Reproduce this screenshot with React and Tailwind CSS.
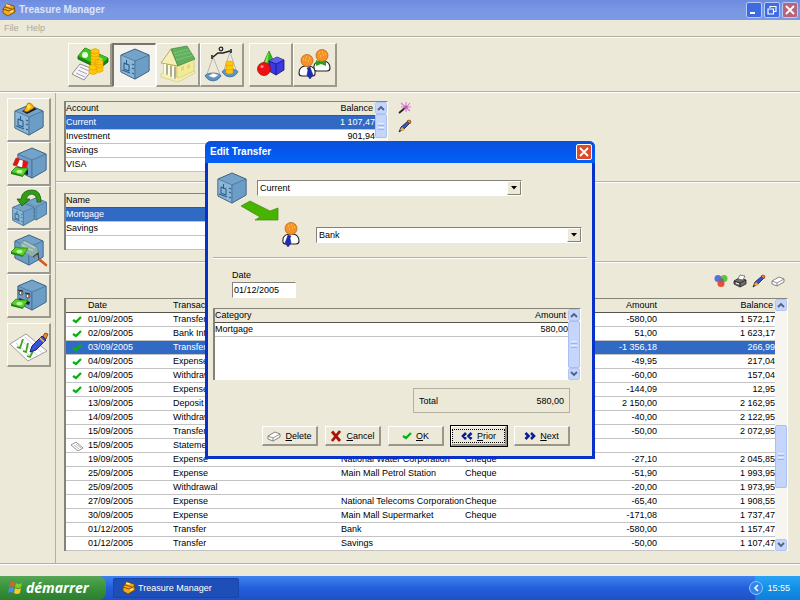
import { useState } from 'react';

const transactions = [
  { mark: 'check', date: '01/09/2005', type: 'Transfer', payee: 'Bank', ref: '', amount: '-580,00', balance: '1 572,17' },
  { mark: 'check', date: '02/09/2005', type: 'Bank Interest', payee: 'Bank', ref: '', amount: '51,00', balance: '1 623,17' },
  { mark: 'check', date: '03/09/2005', type: 'Transfer', payee: 'VISA', ref: '', amount: '-1 356,18', balance: '266,99' },
  { mark: 'check', date: '04/09/2005', type: 'Expense', payee: '', ref: '', amount: '-49,95', balance: '217,04' },
  { mark: 'check', date: '04/09/2005', type: 'Withdrawal', payee: '', ref: '', amount: '-60,00', balance: '157,04' },
  { mark: 'check', date: '10/09/2005', type: 'Expense', payee: '', ref: '', amount: '-144,09', balance: '12,95' },
  { mark: '', date: '13/09/2005', type: 'Deposit', payee: '', ref: '', amount: '2 150,00', balance: '2 162,95' },
  { mark: '', date: '14/09/2005', type: 'Withdrawal', payee: '', ref: '', amount: '-40,00', balance: '2 122,95' },
  { mark: '', date: '15/09/2005', type: 'Transfer', payee: '', ref: '', amount: '-50,00', balance: '2 072,95' },
  { mark: 'note', date: '15/09/2005', type: 'Statement', payee: '', ref: '', amount: '', balance: '' },
  { mark: '', date: '19/09/2005', type: 'Expense', payee: 'National Water Corporation', ref: 'Cheque', amount: '-27,10', balance: '2 045,85' },
  { mark: '', date: '25/09/2005', type: 'Expense', payee: 'Main Mall Petrol Station', ref: 'Cheque', amount: '-51,90', balance: '1 993,95' },
  { mark: '', date: '25/09/2005', type: 'Withdrawal', payee: '', ref: '', amount: '-20,00', balance: '1 973,95' },
  { mark: '', date: '27/09/2005', type: 'Expense', payee: 'National Telecoms Corporation', ref: 'Cheque', amount: '-65,40', balance: '1 908,55' },
  { mark: '', date: '30/09/2005', type: 'Expense', payee: 'Main Mall Supermarket', ref: 'Cheque', amount: '-171,08', balance: '1 737,47' },
  { mark: '', date: '01/12/2005', type: 'Transfer', payee: 'Bank', ref: '', amount: '-580,00', balance: '1 157,47' },
  { mark: '', date: '01/12/2005', type: 'Transfer', payee: 'Savings', ref: '', amount: '-50,00', balance: '1 107,47' },
];

const accounts = [
  { name: 'Current', balance: '1 107,47' },
  { name: 'Investment', balance: '901,94' },
  { name: 'Savings', balance: '' },
  { name: 'VISA', balance: '' },
];

const scheduled = ['Mortgage', 'Savings', ''];

/* ---------- icons ---------- */

const Cube = ({ door = true, ...rest }) => (
  <g stroke="#3a6285" strokeWidth="1" strokeLinejoin="round" {...rest}>
    <path d="M15 1 29 7 29 23 15 31 1 24 1 7z" fill="#74a3ca" />
    <path d="M1 7 15 13 15 31 1 24z" fill={door ? '#8cb6d3' : '#6d9dc5'} strokeWidth=".6" />
    <path d="M15 13 29 7 29 23 15 31z" fill="#6c9dc6" strokeWidth=".6" />
    {door && (
      <g fill="none" stroke="#2a5f92" strokeWidth="1.1">
        <path d="M4 15 9 17 9 23 4 21z" />
        <path d="M6.500 12v5M2 22l8 3M12 16l2 1M12 20l2 1M12 25l2 1" />
      </g>
    )}
  </g>
);

const Banknote = ({ x, y }) => (
  <g transform={`translate(${x} ${y})`}>
    <path d="M0 6 5 1 9 2 17 2 12 10z" fill="#58d024" stroke="#1f8412" strokeWidth=".8" />
    <path d="M0 6 12 10 12 11 0 8z" fill="#1f8412" />
    <ellipse cx="8.500" cy="5.500" rx="3" ry="1.800" fill="#b9f59a" />
  </g>
);

const SafeIcon = ({ className = 'w-9 h-9' }) => (
  <svg viewBox="0 0 36 36" className={className}>
    <Cube transform="translate(3 1)" />
  </svg>
);

const MoneyIcon = () => (
  <svg viewBox="0 0 38 34" className="w-[38px] h-[34px]">
    <path d="M7 9 14 1 37 11 37 15 28 22 7 12z" fill="#178a0c" stroke="#0d5c08" strokeWidth=".8" />
    <path d="M7 9 14 1 37 11 28 19z" fill="#42c51b" />
    <circle cx="14" cy="8" r="3" fill="#e9fbe2" />
    <path d="M28 10 32 12 28 15z" fill="#a0ec7c" />
    <path d="M1 27 9 17 22 22 13 33z" fill="#f6f6fa" stroke="#777" strokeWidth=".8" />
    <path d="M5 26l9 4M7 23l9 4M9 20l9 4" stroke="#9a9aa8" strokeWidth=".9" />
    <g fill="#ffc60a" stroke="#e39a00" strokeWidth=".6">
      <path d="M20 3q4-3 8 0v20q-4 3-8 0z" />
      <path d="M24 14q4-3 8 0v10q-4 3-8 0z" />
      <path d="M18 19q4-3 8 0v7q-4 3-8 0z" />
      <path d="M20 6q4 2 8 0M20 9q4 2 8 0M20 12q4 2 8 0M20 15q4 2 8 0M24 17q4 2 8 0M24 20q4 2 8 0M18 22q4 2 8 0" fill="none" />
    </g>
  </svg>
);

const HouseIcon = () => (
  <svg viewBox="0 0 38 38" className="w-[38px] h-[38px]">
    <path d="M18 20 35 13 35 27 18 36z" fill="#f2eb9b" stroke="#c9bd5f" strokeWidth=".6" />
    <path d="M4 18 18 21 18 36 4 30z" fill="#e0d286" />
    <path d="M2 29 6 27 20 33 35 26 36 28 19 37 2 32z" fill="#f6efad" stroke="#cfc46c" strokeWidth=".6" />
    <path d="M2 18 12 4 19 21z" fill="#f5efb5" stroke="#8f9a4a" strokeWidth=".7" />
    <path d="M12 4 28 1 36 14 19 21z" fill="#62b05e" stroke="#3b8440" strokeWidth=".7" />
    <path d="M15 8 31 4M16 11 33 7M17 15 35 10" stroke="#93d08b" strokeWidth=".8" strokeDasharray="2 1" />
    <path d="M6 19v10M10 20v11M14 21v12" stroke="#fffbe0" strokeWidth="2" />
    <path d="M8 20v10M12 21v11M16 22v12" stroke="#7c89a5" strokeWidth="1" />
    <path d="M22 22l3-1v4l-3 1zM28 20l3-1v4l-3 1z" fill="#e3d673" />
  </svg>
);

const ScalesIcon = () => (
  <svg viewBox="0 0 38 38" className="w-[38px] h-[38px]">
    <path d="M10 12 3 32M10 12 18 32M27 7 20 28M27 7 34 28" stroke="#a8a8a8" strokeWidth=".8" fill="none" />
    <circle cx="18" cy="4" r="1.800" fill="none" stroke="#222" strokeWidth="1.300" />
    <path d="M10 12 15 8 20 8 27 6" fill="none" stroke="#222" strokeWidth="1.600" />
    <path d="M9 10v4M28 4v4" stroke="#222" strokeWidth="1.600" />
    <path d="M2 31a8 3 0 0 1 16 0q-3 5-8 5t-8-5z" fill="#5b95c6" stroke="#2d5f92" strokeWidth=".6" />
    <path d="M5 31l5-3 6 2-5 3z" fill="#fff" stroke="#888" strokeWidth=".6" />
    <path d="M19 27a8 3 0 0 1 16 0q-3 5-8 5t-8-5z" fill="#5b95c6" stroke="#2d5f92" strokeWidth=".6" />
    <path d="M23 17q3-2 7 0v11q-4 2-7 0z" fill="#ffc60a" stroke="#e39a00" strokeWidth=".6" />
    <path d="M23 20q3 2 7 0M23 24q3 2 7 0" fill="none" stroke="#e39a00" strokeWidth=".6" />
  </svg>
);

const ShapesIcon = () => (
  <svg viewBox="0 0 32 32" className="w-8 h-8">
    <path d="M14 3 8 16q5 4 12 0z" fill="#36b81c" stroke="#1d7a10" strokeWidth=".7" />
    <path d="M14 3 12 17 9 16z" fill="#8ce468" />
    <path d="M14 13 22 9 29 12 29 22 21 27 14 23z" fill="#3a3ae0" stroke="#14147a" strokeWidth=".8" />
    <path d="M14 13 22 9 29 12 21 16z" fill="#5f5ff0" />
    <path d="M14 13 21 16 29 12M21 16v11" fill="none" stroke="#14147a" strokeWidth=".8" />
    <circle cx="9" cy="21" r="6.500" fill="#ee1111" stroke="#a00" strokeWidth=".7" />
    <circle cx="7" cy="18.500" r="1.600" fill="#ff8c8c" />
  </svg>
);

const Person = ({ x, y, tie }) => (
  <g transform={`translate(${x} ${y})`}>
    <path d="M1 20q-1-7 6-8h4q6 1 6 7 0 3-3 3H4q-3 0-3-2z" fill="#fff" stroke="#222" strokeWidth="1.100" />
    {tie === 'bow' ? (
      <path d="M3 11l5 2 5-2v6l-5-2-5 2z" fill="#2aa31c" />
    ) : (
      <path d="M6 13l3 1-1 2 1 5-3 4-3-4 2-5z" fill="#1c2cb4" stroke="#0d1670" strokeWidth=".5" />
    )}
    <circle cx="9" cy="6.500" r="6" fill="#f5922a" stroke="#b4600f" strokeWidth=".7" />
    <path d="M6 4h1M9 3h1M12 5h1M7 7h1M10 6h1" stroke="#ffe45a" strokeWidth="1.200" />
  </g>
);

const PeopleIcon = () => (
  <svg viewBox="0 0 34 34" className="w-[34px] h-[34px]">
    <Person x={15} y={2} tie="bow" />
    <g transform="translate(18 7) scale(-1 1)">
      <Person x={0} y={0} />
    </g>
  </svg>
);

const DepositIcon = () => (
  <svg viewBox="0 0 36 36" className="w-9 h-9">
    <Cube transform="translate(3 2)" />
    <path d="M11 9 21 5 26 7 16 12z" fill="#1a1a1a" />
    <path d="M13 9 17 1q4 0 5 3l1 2-7 4z" fill="#ffb400" stroke="#a45c00" strokeWidth=".7" />
    <path d="M16 4l2-2 2 3-3 3z" fill="#ffe45a" />
  </svg>
);

const ShopIcon = () => (
  <svg viewBox="0 0 36 36" className="w-9 h-9">
    <Cube door={false} transform="translate(6 1)" />
    <path d="M7 20 17 24 17 29 7 26z" fill="#222" />
    <path d="M5 12 17 16 15 23 2 19z" fill="#fff" stroke="#900" strokeWidth=".6" />
    <path d="M5 12l4 1-3 7-4-1zM12 14l5 2-2 7-4-1z" fill="#e01414" />
    <Banknote x={0} y={20} />
  </svg>
);

const TransferIcon = () => (
  <svg viewBox="0 0 38 38" className="w-[38px] h-[38px]">
    <Cube transform="translate(15 8) scale(.74)" />
    <Cube transform="translate(2 13) scale(.76)" />
    <path d="M7 10 12 17 20 10 16 10q2-5 6-5 5 1 5 8h4Q31 1 22 1 12 1 11 10z" fill="#2f9e14" stroke="#1a5e0c" strokeWidth=".8" />
  </svg>
);

const LaunderIcon = () => (
  <svg viewBox="0 0 38 38" className="w-[38px] h-[38px]">
    <Cube door={false} transform="translate(4 1)" />
    <path d="M10 11 14 7 27 14 29 21 24 25 11 18z" fill="#8fb0ab" stroke="#5f8590" strokeWidth=".7" />
    <path d="M12 12l11 6M14 9l11 6" stroke="#bcd4cb" strokeWidth="1.400" />
    <path d="M23 24l5-4 1 7 3 2" fill="none" stroke="#444" strokeWidth="1.200" />
    <path d="M30 27l6 5" stroke="#d8591c" strokeWidth="2.600" strokeLinecap="round" />
    <Banknote x={1} y={13} />
  </svg>
);

const MonsterIcon = () => (
  <svg viewBox="0 0 36 36" className="w-9 h-9">
    <Cube door={false} transform="translate(6 1)" />
    <circle cx="10" cy="15" r="2" fill="#fff" stroke="#222" strokeWidth=".8" />
    <circle cx="17" cy="18" r="2" fill="#fff" stroke="#222" strokeWidth=".8" />
    <path d="M7 12l5 1M14 15l5 1" stroke="#222" strokeWidth="1.100" />
    <path d="M10 15h1M17 18h1" stroke="#d01010" strokeWidth="1.600" />
    <path d="M8 20 19 24 18 27 8 24z" fill="#222" />
    <Banknote x={0} y={20} />
  </svg>
);

const ReconcileIcon = () => (
  <svg viewBox="0 0 40 36" className="w-10 h-9">
    <path d="M1 17 17 7 38 24 19 34z" fill="#fff" stroke="#888" strokeWidth=".8" />
    <path d="M7 16 22 30M12 13 28 28M16 10 33 26" stroke="#c9c9d2" strokeWidth=".8" />
    <path d="M8 20l3 1 3-9M14 24l3 1 2-9M18 29l3 1 3-6" fill="none" stroke="#3da51d" strokeWidth="1.800" />
    <path d="M21 25 23 19 33 9 37 13 27 23z" fill="#3c50d8" stroke="#0d1670" strokeWidth=".9" />
    <path d="M34 9 36 6 39 7 37 12z" fill="#f08a24" stroke="#5a2a00" strokeWidth=".7" />
    <path d="M31 11l4 4" stroke="#f3c33c" strokeWidth="1.400" />
  </svg>
);

const WandIcon = () => (
  <svg viewBox="0 0 14 14" className="w-3.5 h-3.5">
    <path d="M1 12 7 7" stroke="#222" strokeWidth="1.800" />
    <path d="M8 1v10M3 2l9 8M3 6h10M12 2 6 9" stroke="#dd78d4" strokeWidth="1.100" />
    <circle cx="8" cy="6" r="1.600" fill="#c24fcc" />
  </svg>
);

const PenIcon = () => (
  <svg viewBox="0 0 14 14" className="w-3.5 h-3.5">
    <path d="M1 13 3 8 10 2 12 4 6 10z" fill="#3c50c8" stroke="#222" strokeWidth=".8" />
    <path d="M4 8l3 3-2 1-3-1z" fill="#f3b23c" />
    <path d="M9 2l2-1 2 1-1 3z" fill="#f08a24" stroke="#5a2a00" strokeWidth=".6" />
  </svg>
);

const BallsIcon = () => (
  <svg viewBox="0 0 14 14" className="w-3.5 h-3.5">
    <circle cx="4" cy="4.500" r="3.500" fill="#5a6fe0" />
    <circle cx="10" cy="4.500" r="3.500" fill="#5cc43a" />
    <circle cx="7" cy="9.500" r="3.500" fill="#ec4a3a" />
    <path d="M4 6l3-3 3 3-3 3z" fill="#7a6a7a" />
  </svg>
);

const PrinterIcon = () => (
  <svg viewBox="0 0 14 14" className="w-3.5 h-3.5">
    <path d="M1 7 6 4 13 6 13 10 7 13 1 10z" fill="#6d6d6d" stroke="#222" strokeWidth=".8" />
    <path d="M1 7 7 9 13 6M7 9v4" fill="none" stroke="#222" strokeWidth=".8" />
    <path d="M5 5 7 1 12 2 10 6z" fill="#fff" stroke="#555" strokeWidth=".7" />
    <path d="M3 9l3 1" stroke="#fff" />
  </svg>
);

const EraserIcon = () => (
  <svg viewBox="0 0 14 12" className="w-3.5 h-3">
    <path d="M1 6 8 2 13 4 13 7 6 11 1 9z" fill="#fff" stroke="#777" strokeWidth=".9" />
    <path d="M1 6 6 8 13 4M6 8v3" fill="none" stroke="#777" strokeWidth=".8" />
  </svg>
);

const CheckIcon = () => (
  <svg viewBox="0 0 10 10" className="w-2.5 h-2.5">
    <path d="M1 5 4 7 9 2" fill="none" stroke="#0cae13" strokeWidth="2.300" />
  </svg>
);

const NoteIcon = () => (
  <svg viewBox="0 0 14 10" className="w-3.5 h-2.5">
    <path d="M1 4 6 1 13 7 8 10z" fill="#fff" stroke="#777" strokeWidth=".8" />
    <path d="M4 4l5 4M6 3l5 4" stroke="#999" strokeWidth=".7" />
  </svg>
);

const CrossIcon = () => (
  <svg viewBox="0 0 12 12" className="w-3 h-3">
    <path d="M2 1.500 10 11M10 1 2 11" stroke="#a81208" strokeWidth="2.800" />
  </svg>
);

const DoubleArrow = ({ flip }) => (
  <svg viewBox="0 0 12 10" className={flip ? 'w-3 h-2.5 rotate-180' : 'w-3 h-2.5'}>
    <path d="M5 2 2 5 5 8M10.500 2 7.500 5 10.500 8" fill="none" stroke="#0a1c94" strokeWidth="2.600" />
  </svg>
);

const ChestIcon = () => (
  <svg viewBox="0 0 14 14" className="w-3.5 h-3.5">
    <path d="M1 6 5 1 12 3 13 9 6 13 1 10z" fill="#f5a81c" stroke="#6a4200" strokeWidth=".8" />
    <path d="M1 6 7 8 13 5M3 4l7 2" fill="none" stroke="#6a4200" strokeWidth=".8" />
    <path d="M4 2l4 1M8 9l3-1" stroke="#ffe98a" strokeWidth="1.400" />
  </svg>
);

const FlagIcon = () => (
  <svg viewBox="0 0 16 16" className="w-4 h-4">
    <path d="M3 3q3-2 5 0L7 7q-2-2-5 0z" fill="#ee5a24" />
    <path d="M9 3q3 2 6 0l-1 4q-3 2-6 0z" fill="#7fd02c" />
    <path d="M2 8q3-2 5 0l-1 5q-2-2-5 0z" fill="#4a8cf0" />
    <path d="M8 8q3 2 6 0l-1 5q-3 2-6 0z" fill="#fbc81c" />
  </svg>
);

/* ---------- building blocks ---------- */

const ToolButton = ({ label, pressed, children }) => (
  <button
    type="button"
    aria-label={label}
    aria-pressed={!!pressed}
    className={`flex h-11 w-11 shrink-0 items-center justify-center overflow-hidden border ${
      pressed
        ? 'border-t-2 border-l-2 border-[#77746a] border-r-white border-b-white bg-[#f5f3ec]'
        : 'border-r-2 border-b-2 border-white border-r-[#9d9a8d] border-b-[#9d9a8d] bg-[#ece9d8]'
    }`}
  >
    {children}
  </button>
);

const Etched = () => <div className="h-0.5 shrink-0 border-t border-b border-t-[#b3b0a2] border-b-white" />;

const ScrollButton = ({ down }) => (
  <button
    type="button"
    aria-label={down ? 'Scroll down' : 'Scroll up'}
    className="flex h-3 shrink-0 items-center justify-center rounded-xs border border-[#b3c6f2] bg-[#c6d5fb]"
  >
    <svg viewBox="0 0 8 6" className={down ? 'h-1.5 w-2 rotate-180' : 'h-1.5 w-2'}>
      <path d="M1 5 4 2 7 5" fill="none" stroke="#4d6185" strokeWidth="1.800" />
    </svg>
  </button>
);

const Thumb = ({ className }) => (
  <div className={`flex flex-col items-center justify-center gap-px rounded-xs border border-[#a9bff0] bg-[#c6d5fb] ${className}`}>
    <span className="h-px w-1.5 bg-[#e8effd]" />
    <span className="h-px w-1.5 bg-[#9db4ea]" />
    <span className="h-px w-1.5 bg-[#e8effd]" />
    <span className="h-px w-1.5 bg-[#9db4ea]" />
  </div>
);

const ScrollBar = ({ children }) => (
  <div className="flex w-3 shrink-0 flex-col bg-[#f6f5ef]">
    <ScrollButton />
    {children}
    <ScrollButton down />
  </div>
);

const Frame = ({ className, children }) => (
  <div className={`flex border-t border-l-2 border-r border-[#85827a] border-r-white bg-white ${className}`}>{children}</div>
);

const headCell = 'h-3.5 border-b border-[#55534c] bg-[#ece9d8] p-0 font-normal';
const cell = 'h-3.5 border-b border-[#c3c3c3] p-0';
const grid = 'w-full flex-1 table-fixed border-separate border-spacing-0 whitespace-nowrap text-left leading-[13px]';
const selectedRow = 'bg-[#316ac5] text-white';

const AccountsTable = () => {
  const [selected, setSelected] = useState(0);
  return (
    <Frame className="w-[324px]">
      <table className={grid}>
        <thead>
          <tr>
            <th className={headCell}>Account</th>
            <th className={`${headCell} text-right`}><span className="pr-0.5">Balance</span></th>
          </tr>
        </thead>
        <tbody>
          {accounts.map((a, i) => (
            <tr key={a.name} onClick={() => setSelected(i)} className={i === selected ? selectedRow : ''}>
              <td className={cell}>{a.name}</td>
              <td className={`${cell} text-right`}>{a.balance}</td>
            </tr>
          ))}
        </tbody>
      </table>
      <ScrollBar>
        <Thumb className="flex-[23]" />
        <div className="flex-[23]" />
      </ScrollBar>
    </Frame>
  );
};

const ScheduledTable = () => (
  <Frame className="w-[324px]">
    <table className={grid}>
      <thead>
        <tr><th className={headCell}>Name</th></tr>
      </thead>
      <tbody>
        {scheduled.map((name, i) => (
          <tr key={i} className={i === 0 ? selectedRow : ''}>
            <td className={cell}>{name}</td>
          </tr>
        ))}
      </tbody>
    </table>
  </Frame>
);

const TransactionsTable = () => {
  const [selected, setSelected] = useState(2);
  return (
    <Frame className="mr-3">
      <table className={grid}>
        <colgroup>
          <col className="w-[22px]" />
          <col className="w-[85px]" />
          <col className="w-[168px]" />
          <col className="w-[124px]" />
          <col className="w-28" />
          <col className="w-20" />
          <col />
        </colgroup>
        <thead>
          <tr>
            <th className={headCell} />
            <th className={headCell}>Date</th>
            <th className={headCell}>Transaction</th>
            <th className={headCell} />
            <th className={headCell} />
            <th className={`${headCell} text-right`}>Amount</th>
            <th className={`${headCell} text-right`}><span className="pr-0.5">Balance</span></th>
          </tr>
        </thead>
        <tbody>
          {transactions.map((t, i) => (
            <tr key={i} onClick={() => setSelected(i)} className={i === selected ? selectedRow : ''}>
              <td className={cell}>
                <div className="flex justify-center">
                  {t.mark === 'check' && <CheckIcon />}
                  {t.mark === 'note' && <NoteIcon />}
                </div>
              </td>
              <td className={cell}>{t.date}</td>
              <td className={cell}>{t.type}</td>
              <td className={cell}>{t.payee}</td>
              <td className={cell}>{t.ref}</td>
              <td className={`${cell} text-right`}>{t.amount}</td>
              <td className={`${cell} text-right`}>{t.balance}</td>
            </tr>
          ))}
        </tbody>
      </table>
      <ScrollBar>
        <div className="flex-[114]" />
        <Thumb className="flex-[62]" />
        <div className="flex-[51]" />
      </ScrollBar>
    </Frame>
  );
};

const sunken = 'border border-[#85827a] border-r-white border-b-white bg-white';

const ComboBox = ({ label, options, className }) => (
  <div className={`relative ${className}`}>
    <select aria-label={label} className={`block h-4 w-full appearance-none pl-0.5 leading-3 ${sunken}`}>
      {options.map((o) => <option key={o}>{o}</option>)}
    </select>
    <span className="pointer-events-none absolute top-px right-px flex h-3.5 w-3.5 items-center justify-center border border-white border-r-[#85827a] border-b-[#85827a] bg-[#ece9d8]">
      <svg viewBox="0 0 6 4" className="h-1 w-1.5"><path d="M0 0h6L3 3.500z" fill="#000" /></svg>
    </span>
  </div>
);

const DialogButton = ({ icon, label, focused, onClick }) => (
  <div className={focused ? 'border border-black' : 'border border-transparent'}>
    <button
      type="button"
      onClick={onClick}
      className="flex h-5 w-14 items-center justify-center border border-r-2 border-b-2 border-white border-r-[#9a978a] border-b-[#9a978a] bg-[#ece9d8]"
    >
      <span className={`flex h-3.5 w-full items-center justify-center gap-1 border border-dotted ${focused ? 'border-black' : 'border-transparent'}`}>
        {icon}
        <span><u>{label[0]}</u>{label.slice(1)}</span>
      </span>
    </button>
  </div>
);

const TransferDialog = ({ onClose }) => (
  <div className="pointer-events-none absolute inset-0 flex items-center justify-center">
    <div
      role="dialog"
      aria-label="Edit Transfer"
      className="pointer-events-auto w-[390px] rounded-t-md border-x-3 border-b-3 border-[#0831c9] bg-[#ece9d8]"
    >
      <div className="-mx-[3px] flex h-[22px] items-center justify-between rounded-t-md bg-linear-to-b from-[#0a50d8] via-[#0458ee] to-[#0561f5] pr-[3px] pl-[5px]">
        <h2 className="text-[10px] font-bold text-white">Edit Transfer</h2>
        <button
          type="button"
          aria-label="Close"
          onClick={onClose}
          className="flex h-4 w-4 items-center justify-center rounded-xs border border-white bg-[#dc4a2a]"
        >
          <svg viewBox="0 0 10 10" className="h-2.5 w-2.5"><path d="M1 1l8 8M9 1 1 9" stroke="#fff" strokeWidth="1.800" /></svg>
        </button>
      </div>

      <form className="px-[5px] pt-[9px] pb-[9px]" onSubmit={(e) => e.preventDefault()}>
        <div className="flex h-8 items-center">
          <svg viewBox="0 0 30 32" className="ml-1 h-8 w-[30px]"><Cube /></svg>
          <ComboBox label="From" options={['Current', 'Investment', 'Savings', 'VISA']} className="ml-2.5 w-[265px]" />
        </div>
        <svg viewBox="0 0 40 22" className="-mt-1 ml-[27px] h-[22px] w-10">
          <path d="M1 6 10 1 30 11 38 8 38 20 15 20 20 17z" fill="#46b400" stroke="#3a8c0a" strokeWidth=".7" />
        </svg>
        <div className="flex h-[25px] items-center">
          <svg viewBox="0 0 18 26" className="ml-[69px] h-[26px] w-[18px]"><Person x={0} y={0} /></svg>
          <ComboBox label="To" options={['Bank', 'Savings']} className="ml-4 w-[266px]" />
        </div>
        <div className="mt-2.5"><Etched /></div>

        <div className="mt-2.5 ml-[19px] flex w-16 flex-col">
          <label htmlFor="date" className="h-[13px] leading-3">Date</label>
          <input id="date" defaultValue="01/12/2005" className={`h-4 w-full px-px ${sunken}`} />
        </div>

        <Frame className="mt-2.5 mr-1.5 h-[72px]">
          <div className="flex-1">
            <table className={grid}>
              <thead>
                <tr>
                  <th className={headCell}>Category</th>
                  <th className={`${headCell} text-right`}><span className="pr-0.5">Amount</span></th>
                </tr>
              </thead>
              <tbody>
                <tr>
                  <td className={cell}>Mortgage</td>
                  <td className={`${cell} text-right`}>580,00</td>
                </tr>
              </tbody>
            </table>
          </div>
          <ScrollBar>
            <Thumb className="flex-1" />
          </ScrollBar>
        </Frame>

        <div className="mt-2 mr-[17px] ml-auto flex h-[25px] w-[157px] items-center justify-between border border-[#b3b0a2] px-[5px]">
          <span>Total</span>
          <span>580,00</span>
        </div>

        <div className="mt-3 mr-4 flex justify-end gap-[5px]">
          <DialogButton icon={<EraserIcon />} label="Delete" />
          <DialogButton icon={<CrossIcon />} label="Cancel" onClick={onClose} />
          <DialogButton icon={<CheckIcon />} label="OK" onClick={onClose} />
          <DialogButton icon={<DoubleArrow />} label="Prior" focused />
          <DialogButton icon={<DoubleArrow flip />} label="Next" />
        </div>
      </form>
    </div>
  </div>
);

const windowButton = 'flex h-4 w-4 items-center justify-center rounded-xs border border-[#b9c9f5]';

const App = () => {
  const [dialogOpen, setDialogOpen] = useState(true);

  return (
    <div className="relative flex min-h-screen flex-col bg-[#ece9d8] font-['Liberation_Sans',sans-serif] text-[9px] leading-3 text-black">
      {/* Title bar */}
      <header className="flex h-5 items-center gap-[3px] bg-linear-to-b from-[#6d8be0] via-[#7b97e3] to-[#7a9ae6] px-0.5">
        <ChestIcon />
        <h1 className="flex-1 text-[10px] font-bold text-[#dbe4f8]">Treasure Manager</h1>
        <div className="flex gap-0.5">
          <button type="button" aria-label="Minimize" className={`${windowButton} bg-[#3f6be0]`}>
            <svg viewBox="0 0 10 10" className="h-2.5 w-2.5"><path d="M1 8h5" stroke="#fff" strokeWidth="2" /></svg>
          </button>
          <button type="button" aria-label="Restore" className={`${windowButton} bg-[#3f6be0]`}>
            <svg viewBox="0 0 10 10" className="h-2.5 w-2.5"><path d="M3 3V1.500h6v5H7M1 4h5.500v5H1z" fill="none" stroke="#fff" strokeWidth="1.200" /></svg>
          </button>
          <button type="button" aria-label="Close window" className={`${windowButton} bg-[#b5667a]`}>
            <svg viewBox="0 0 10 10" className="h-2.5 w-2.5"><path d="M1 1l8 8M9 1 1 9" stroke="#fff" strokeWidth="1.800" /></svg>
          </button>
        </div>
      </header>

      {/* Menu */}
      <nav className="flex h-4 items-center gap-2 px-1 text-[#aca899]">
        <button type="button">File</button>
        <button type="button">Help</button>
      </nav>
      <Etched />

      {/* Toolbar */}
      <div className="flex h-[53px] items-center px-[68px]">
        <ToolButton label="Cash flow"><MoneyIcon /></ToolButton>
        <ToolButton label="Accounts" pressed><SafeIcon /></ToolButton>
        <ToolButton label="Bank"><HouseIcon /></ToolButton>
        <ToolButton label="Balance"><ScalesIcon /></ToolButton>
        <div className="ml-[5px] flex">
          <ToolButton label="Categories"><ShapesIcon /></ToolButton>
          <ToolButton label="People"><PeopleIcon /></ToolButton>
        </div>
      </div>
      <Etched />

      <div className="flex flex-1">
        {/* Sidebar */}
        <aside className="w-14 border-r border-[#b3b0a2] pt-[5px] pl-[7px]">
          <ToolButton label="Deposit"><DepositIcon /></ToolButton>
          <ToolButton label="Expense"><ShopIcon /></ToolButton>
          <ToolButton label="Transfer"><TransferIcon /></ToolButton>
          <ToolButton label="Withdrawal"><LaunderIcon /></ToolButton>
          <ToolButton label="Charges"><MonsterIcon /></ToolButton>
          <div className="mt-[5px]">
            <ToolButton label="Reconcile"><ReconcileIcon /></ToolButton>
          </div>
        </aside>

        <main className="flex min-w-0 flex-1 flex-col">
          <section className="flex gap-2.5 pt-2 pb-[9px] pl-2">
            <AccountsTable />
            <div className="flex flex-col gap-1">
              <button type="button" aria-label="New account"><WandIcon /></button>
              <button type="button" aria-label="Edit account"><PenIcon /></button>
            </div>
          </section>
          <Etched />
          <section className="pt-2.5 pb-[11px] pl-2">
            <ScheduledTable />
          </section>
          <Etched />
          <section className="pb-[11px] pl-2">
            <div className="flex h-[35px] items-center justify-end gap-[5px] pr-[15px]">
              <button type="button" aria-label="Colours"><BallsIcon /></button>
              <button type="button" aria-label="Print"><PrinterIcon /></button>
              <button type="button" aria-label="Edit"><PenIcon /></button>
              <button type="button" aria-label="Delete transaction"><EraserIcon /></button>
            </div>
            <TransactionsTable />
          </section>
        </main>
      </div>
      <Etched />
      <div className="h-[11px]" />

      {/* Taskbar */}
      <footer className="flex h-6 items-stretch bg-linear-to-b from-[#3f84ee] via-[#245edb] to-[#1f52c4] text-white">
        <button
          type="button"
          className="flex w-[106px] items-center gap-[3px] rounded-r-lg bg-linear-to-b from-[#56a656] via-[#379338] to-[#2d7d2e] pl-[7px] font-['Open_Sans',sans-serif] text-sm font-bold italic"
        >
          <FlagIcon />
          démarrer
        </button>
        <button type="button" className="my-0.5 ml-[7px] flex w-[126px] items-center gap-0.5 rounded-xs border border-[#1a44a6] bg-[#1e4fb8] pl-2">
          <ChestIcon />
          Treasure Manager
        </button>
        <div className="ml-auto flex items-center gap-1 bg-linear-to-b from-[#2aa3f2] via-[#1290e8] to-[#0f7fd8] pr-2.5">
          <button type="button" aria-label="Show hidden icons" className="-ml-1.5 flex h-3.5 w-3.5 items-center justify-center rounded-full border border-[#8fc4f8] bg-[#2f86ea]">
            <svg viewBox="0 0 6 8" className="h-2 w-1.5"><path d="M5 1 2 4l3 3" fill="none" stroke="#fff" strokeWidth="1.600" /></svg>
          </button>
          <time>15:55</time>
        </div>
      </footer>

      {dialogOpen && <TransferDialog onClose={() => setDialogOpen(false)} />}
    </div>
  );
};

export default App;
